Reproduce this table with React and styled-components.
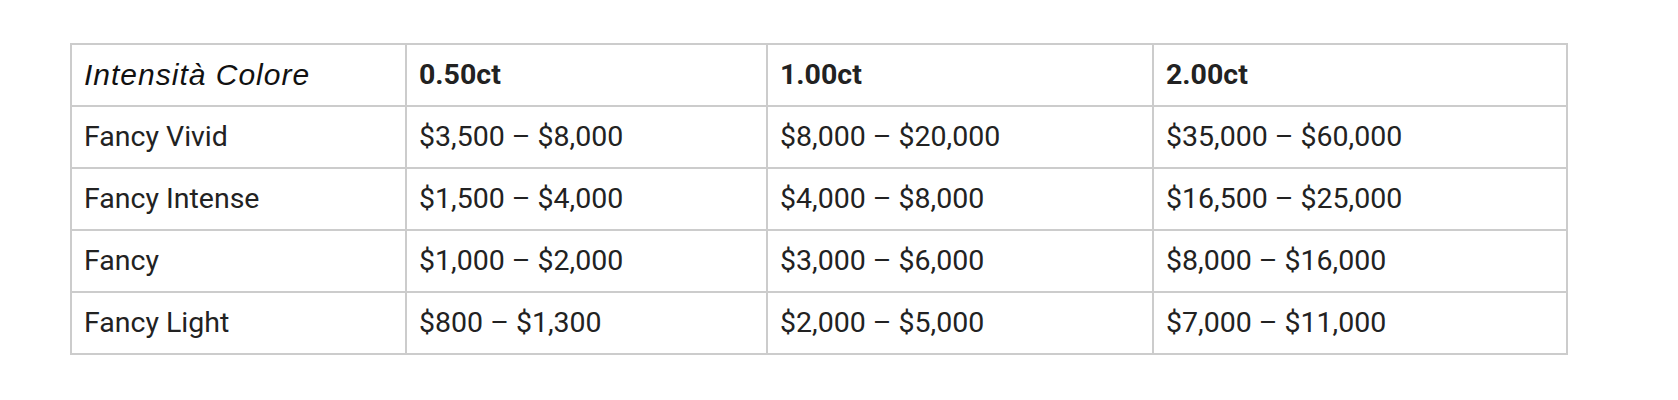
import React from "react";
import styled, { createGlobalStyle } from "styled-components";

const GlobalStyle = createGlobalStyle`
  body {
    margin: 0;
    background: #ffffff;
    font-family: Roboto, "Liberation Sans", sans-serif;
  }
`;

const Page = styled.div`
  padding: 43px 0 0 70px;
`;

const Table = styled.table`
  border-collapse: collapse;
  table-layout: fixed;
  width: 1496px;
  color: #222222;
  font-family: Roboto, sans-serif;
  font-size: 28.5px;
`;

const Cell = styled.td`
  border: 2px solid #cccccc;
  height: 60px;
  padding: 0 12px;
  line-height: 32px;
  font-weight: ${(p) => (p.$head ? 700 : 400)};
  vertical-align: middle;
  white-space: nowrap;
`;

const Title = styled.em`
  font-family: "Liberation Sans", Arial, sans-serif;
  font-size: 30px;
  letter-spacing: 1px;
  font-style: italic;
  font-weight: 400;
  color: #111111;
`;

const widths = [335, 361, 386, 414];

const rows = [
  ["Fancy Vivid", "$3,500 – $8,000", "$8,000 – $20,000", "$35,000 – $60,000"],
  ["Fancy Intense", "$1,500 – $4,000", "$4,000 – $8,000", "$16,500 – $25,000"],
  ["Fancy", "$1,000 – $2,000", "$3,000 – $6,000", "$8,000 – $16,000"],
  ["Fancy Light", "$800 – $1,300", "$2,000 – $5,000", "$7,000 – $11,000"],
];

export default function App() {
  return (
    <>
      <GlobalStyle />
      <Page>
        <Table>
          <colgroup>
            {widths.map((w) => (
              <col key={w} style={{ width: w }} />
            ))}
          </colgroup>
          <tbody>
            <tr>
              <Cell>
                <Title>Intensità Colore</Title>
              </Cell>
              <Cell $head>0.50ct</Cell>
              <Cell $head>1.00ct</Cell>
              <Cell $head>2.00ct</Cell>
            </tr>
            {rows.map((r) => (
              <tr key={r[0]}>
                {r.map((c, i) => (
                  <Cell key={i}>{c}</Cell>
                ))}
              </tr>
            ))}
          </tbody>
        </Table>
      </Page>
    </>
  );
}
